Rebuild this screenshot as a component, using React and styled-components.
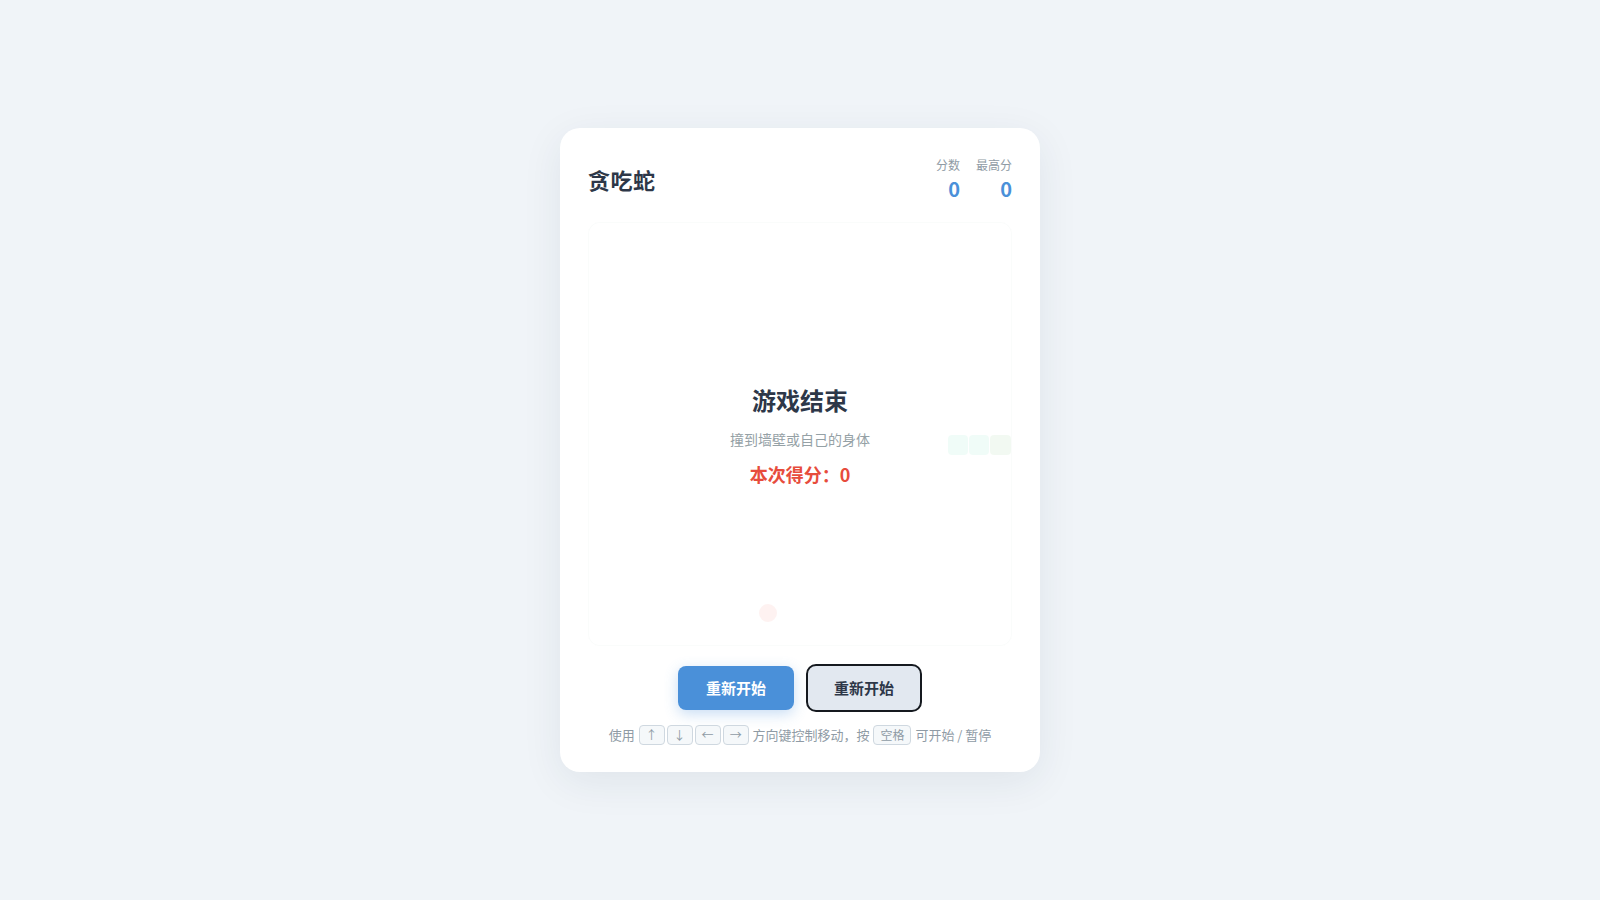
import React from 'react';
import styled, { createGlobalStyle } from 'styled-components';

const GlobalStyle = createGlobalStyle`
	html, body {
		margin: 0;
		padding: 0;
		height: 100%;
	}
	body {
		background: #f0f4f8;
		font-family: "Noto Sans CJK SC", "Noto Sans", sans-serif;
		color: #2d3748;
	}
	#root {
		height: 100%;
	}
`

const Page = styled.div`
	min-height: 100vh;
	display: flex;
	align-items: center;
	justify-content: center;
`

const Card = styled.div`
	width: 480px;
	box-sizing: border-box;
	padding: 28px 28px 26px;
	background: #ffffff;
	border-radius: 20px;
	box-shadow: 0 10px 40px rgba(30, 50, 80, 0.08);
`

const Header = styled.div`
	display: flex;
	align-items: center;
	justify-content: space-between;
	height: 46px;
	margin-bottom: 20px;
`

const Title = styled.h1`
	margin: 0;
	font-size: 22px;
	font-weight: 700;
	color: #2d3748;
	letter-spacing: 0.5px;
`

const Scores = styled.div`
	display: flex;
	gap: 16px;
	margin-top: 2px;
`

const ScoreBox = styled.div`
	text-align: right;
`

const ScoreLabel = styled.div`
	font-size: 12px;
	line-height: 16px;
	color: #8f9ba5;
`

const ScoreValue = styled.div`
	margin-top: 2px;
	font-size: 20px;
	font-weight: 700;
	line-height: 28px;
	color: #4a90d9;
`

const Board = styled.div`
	position: relative;
	width: 424px;
	height: 424px;
	box-sizing: border-box;
	border-radius: 12px;
	border: 1px solid #fafcfb;
	background: #fdfefe;
	display: grid;
	grid-template-columns: repeat(20, 1fr);
	grid-template-rows: repeat(20, 1fr);
	overflow: hidden;
`

const Cell = styled.div`
	margin: 0.5px;
	border-radius: 4px;
	background: ${p => (p.$head ? '#4caf50' : '#34d399')};
`

const Food = styled.div`
	align-self: center;
	justify-self: center;
	width: 18px;
	height: 18px;
	border-radius: 50%;
	background: #e74c3c;
`

const Overlay = styled.div`
	position: absolute;
	inset: 0;
	background: rgba(255, 255, 255, 0.93);
	display: flex;
	flex-direction: column;
	align-items: center;
	justify-content: center;
	padding-top: 2px;
`

const OverTitle = styled.div`
	font-size: 24px;
	font-weight: 700;
	line-height: 32px;
	color: #2d3748;
`

const OverText = styled.div`
	margin-top: 13px;
	font-size: 14px;
	line-height: 20px;
	color: #95a1a6;
`

const OverScore = styled.div`
	margin-top: 12px;
	font-size: 18px;
	font-weight: 700;
	line-height: 26px;
	color: #e74c3c;
`

const Buttons = styled.div`
	display: flex;
	align-items: center;
	justify-content: center;
	gap: 12px;
	margin-top: 18px;
`

const Button = styled.button`
	font-family: inherit;
	font-size: 15px;
	font-weight: 700;
	line-height: 20px;
	cursor: pointer;
	border-radius: ${p => (p.$primary ? '8px' : '10px')};
	padding: ${p => (p.$primary ? '12px 28px' : '12px 26px')};
	border: ${p => (p.$primary ? 'none' : '2px solid #15191f')};
	background: ${p => (p.$primary ? '#4a90d9' : '#e2e8f0')};
	color: ${p => (p.$primary ? '#ffffff' : '#2d3748')};
	box-shadow: ${p => (p.$primary ? '0 4px 14px rgba(74, 144, 217, 0.3)' : 'none')};
`

const Help = styled.div`
	margin-top: 12px;
	text-align: center;
	font-size: 13px;
	line-height: 22px;
	color: #8f9ba5;
`

const Key = styled.kbd`
	display: inline-block;
	font-family: inherit;
	font-size: 12px;
	line-height: 18px;
	padding: 0 6px;
	margin: 0 1px;
	border: 1px solid #cfd8e0;
	border-radius: 4px;
	background: #f5f8fa;
	color: #8f9ba5;
`

const snake = [
	{ x: 17, y: 10 },
	{ x: 18, y: 10 },
	{ x: 19, y: 10, head: true },
]
const food = { x: 8, y: 18 }

const App = () => {
	return (
		<>
			<GlobalStyle />
			<Page>
				<Card>
					<Header>
						<Title>贪吃蛇</Title>
						<Scores>
							<ScoreBox>
								<ScoreLabel>分数</ScoreLabel>
								<ScoreValue>0</ScoreValue>
							</ScoreBox>
							<ScoreBox>
								<ScoreLabel>最高分</ScoreLabel>
								<ScoreValue>0</ScoreValue>
							</ScoreBox>
						</Scores>
					</Header>
					<Board>
						{snake.map((s, i) => (
							<Cell
								key={i}
								$head={s.head}
								style={{ gridColumn: s.x + 1, gridRow: s.y + 1 }}
							/>
						))}
						<Food style={{ gridColumn: food.x + 1, gridRow: food.y + 1 }} />
						<Overlay>
							<OverTitle>游戏结束</OverTitle>
							<OverText>撞到墙壁或自己的身体</OverText>
							<OverScore>本次得分：0</OverScore>
						</Overlay>
					</Board>
					<Buttons>
						<Button $primary>重新开始</Button>
						<Button>重新开始</Button>
					</Buttons>
					<Help>
						使用 <Key>↑</Key><Key>↓</Key><Key>←</Key><Key>→</Key> 方向键控制移动，按 <Key>空格</Key> 可开始 / 暂停
					</Help>
				</Card>
			</Page>
		</>
	)
}

export default App
